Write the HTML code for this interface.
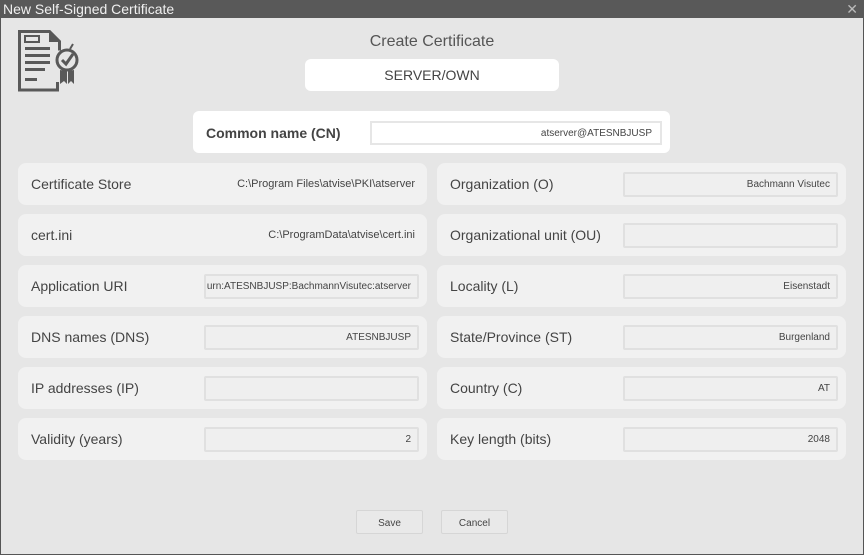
<!DOCTYPE html>
<html><head><style>
*{box-sizing:border-box;margin:0;padding:0}
body{width:864px;height:555px;background:#e6e6e6;font-family:"Liberation Sans",Arial,sans-serif;position:relative;overflow:hidden;color:#444}
.win{position:absolute;left:0;top:0;width:864px;height:555px;border:1px solid #555;border-top:none}
.title{position:absolute;left:0;top:0;width:864px;height:18px;background:#595959;color:#f0f0f0;font-size:14px;line-height:18px;padding-left:3px}
.x{position:absolute;right:6px;top:0;color:#bbb;font-size:14px}
.abs{position:absolute}
.panel{position:absolute;width:409px;height:42px;background:#f1f1f1;border-radius:8px}
.lbl{position:absolute;left:13px;top:0;line-height:42px;font-size:14px;color:#444}
.val{position:absolute;right:12px;top:0;line-height:42px;font-size:11px;color:#444}
.inp{position:absolute;left:186px;top:9px;width:215px;height:25px;background:#efefef;border:2px solid #e0e0e0;border-radius:2px;font-size:10px;line-height:22px;text-align:right;padding-right:6px;color:#444;white-space:nowrap;overflow:hidden}
.btn{position:absolute;top:510px;width:67px;height:24px;border:1px solid #d6d6d6;background:#e9e9e9;border-radius:2px;font-size:10px;text-align:center;line-height:25px;color:#444}
</style></head><body>
<div class="win"></div>
<div class="title">New Self-Signed Certificate<span class="x">✕</span></div>
<svg class="abs" style="left:17px;top:28px" width="64" height="64" viewBox="0 0 64 64">
<path d="M2.5 3.5h30l10 10v9" fill="none" stroke="#595959" stroke-width="3"/>
<path d="M2.5 2v60h38v-8" fill="none" stroke="#595959" stroke-width="3"/>
<path d="M32 2v12h11z" fill="#595959"/>
<rect x="8" y="8" width="14" height="6" fill="none" stroke="#595959" stroke-width="2"/>
<rect x="8" y="19" width="25" height="3" fill="#595959"/>
<rect x="8" y="26" width="25" height="3" fill="#595959"/>
<rect x="8" y="33" width="25" height="3" fill="#595959"/>
<rect x="8" y="40" width="20" height="3" fill="#595959"/>
<rect x="8" y="50" width="12" height="3" fill="#595959"/>
<circle cx="50" cy="32" r="10" fill="#e6e6e6" stroke="#595959" stroke-width="3"/>
<path d="M45 32l4 4 7-10" fill="none" stroke="#595959" stroke-width="3"/>
<path d="M56 16l-3 5" stroke="#595959" stroke-width="2"/>
<path d="M43 42v14l4-3 3 3v-13M51 43v13l3-3 3 3v-14" fill="#595959"/>
</svg>
<div class="abs" style="left:0;width:864px;top:33px;text-align:center;font-size:16px;color:#555">Create Certificate</div>
<div class="abs" style="left:305px;top:59px;width:254px;height:32px;background:#fff;border-radius:6px;text-align:center;line-height:33px;font-size:14px;color:#444">SERVER/OWN</div>
<div class="abs" style="left:193px;top:111px;width:477px;height:42px;background:#fff;border-radius:6px">
<div class="abs" style="left:13px;top:1px;line-height:42px;font-size:14px;font-weight:bold;color:#444">Common name (CN)</div>
<div class="abs" style="left:177px;top:10px;width:292px;height:24px;border:2px solid #e6e6e6;font-size:10px;line-height:21px;text-align:right;padding-right:8px">atserver@ATESNBJUSP</div>
</div>

<div class="panel" style="left:18px;top:163px"><div class="lbl">Certificate Store</div><div class="val">C:\Program Files\atvise\PKI\atserver</div></div>
<div class="panel" style="left:18px;top:214px"><div class="lbl">cert.ini</div><div class="val">C:\ProgramData\atvise\cert.ini</div></div>
<div class="panel" style="left:18px;top:265px"><div class="lbl">Application URI</div><div class="inp">urn:ATESNBJUSP:BachmannVisutec:atserver</div></div>
<div class="panel" style="left:18px;top:316px"><div class="lbl">DNS names (DNS)</div><div class="inp">ATESNBJUSP</div></div>
<div class="panel" style="left:18px;top:367px"><div class="lbl">IP addresses (IP)</div><div class="inp"></div></div>
<div class="panel" style="left:18px;top:418px"><div class="lbl">Validity (years)</div><div class="inp">2</div></div>

<div class="panel" style="left:437px;top:163px"><div class="lbl">Organization (O)</div><div class="inp">Bachmann Visutec</div></div>
<div class="panel" style="left:437px;top:214px"><div class="lbl">Organizational unit (OU)</div><div class="inp"></div></div>
<div class="panel" style="left:437px;top:265px"><div class="lbl">Locality (L)</div><div class="inp">Eisenstadt</div></div>
<div class="panel" style="left:437px;top:316px"><div class="lbl">State/Province (ST)</div><div class="inp">Burgenland</div></div>
<div class="panel" style="left:437px;top:367px"><div class="lbl">Country (C)</div><div class="inp">AT</div></div>
<div class="panel" style="left:437px;top:418px"><div class="lbl">Key length (bits)</div><div class="inp">2048</div></div>

<div class="btn" style="left:356px">Save</div>
<div class="btn" style="left:441px">Cancel</div>
</body></html>
